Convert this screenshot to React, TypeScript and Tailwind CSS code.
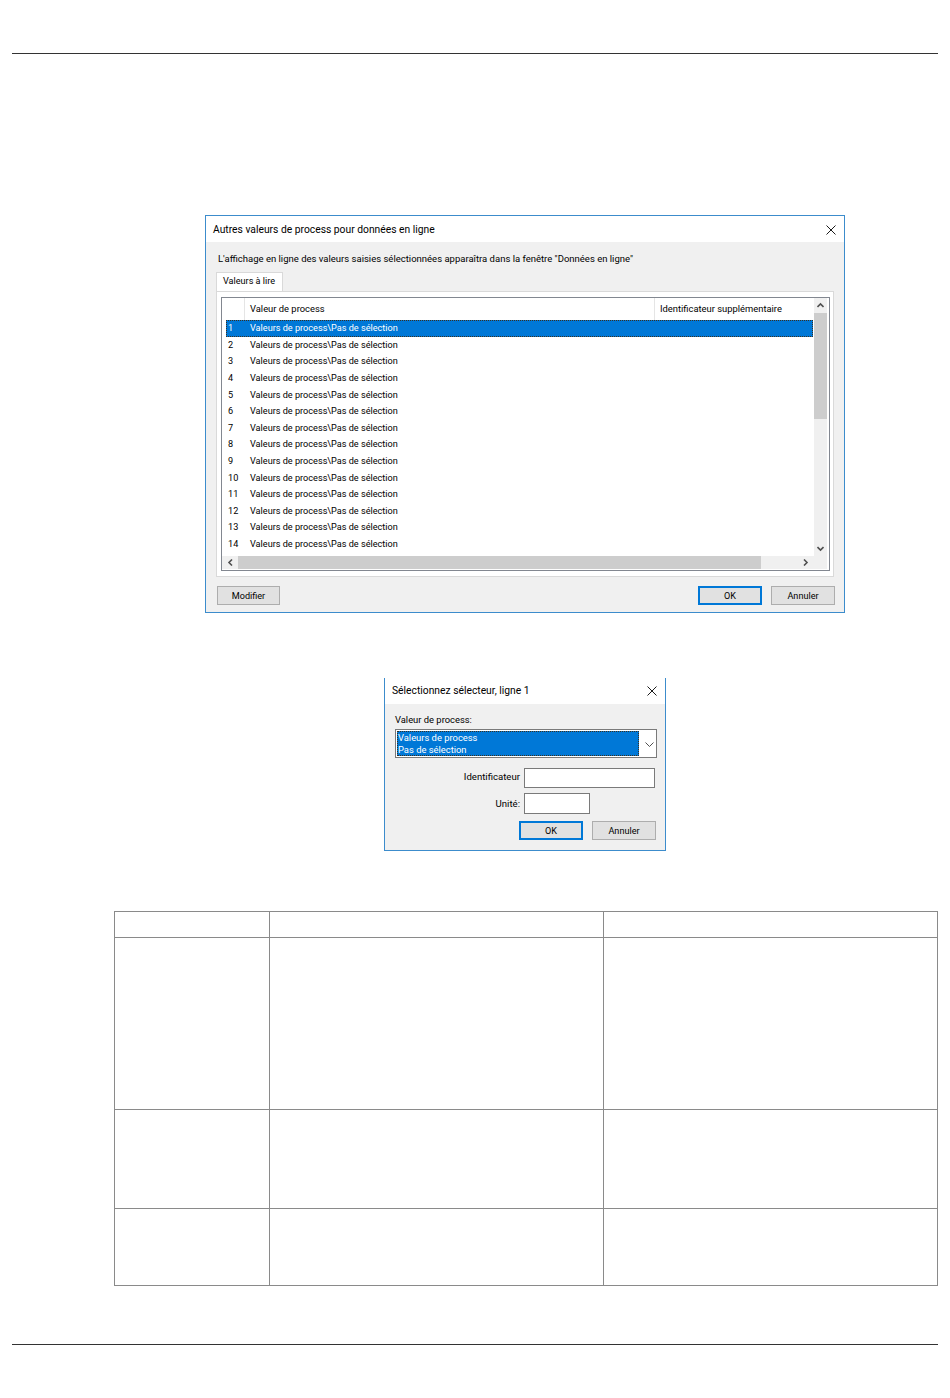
import React from "react";

const font = "[font-family:Roboto,'Liberation_Sans',sans-serif]";

const rows = Array.from({ length: 14 }, (_, i) => i + 1);

const WinButton = ({ label, primary, className }: { label: string; primary?: boolean; className?: string }) => (
  <div
    className={`flex h-[19px] items-center justify-center bg-[#e1e1e1] pt-[3px] text-[9.1px] leading-none text-black ${
      primary ? "border-2 border-[#0078d7]" : "border border-[#adadad]"
    } ${className ?? "w-[64px]"}`}
  >
    {label}
  </div>
);

const CloseIcon = () => (
  <svg width="10" height="10" viewBox="0 0 10 10" fill="none" stroke="#1a1a1a" strokeWidth="1">
    <path d="M0.5 0.5L9.5 9.5M9.5 0.5L0.5 9.5" />
  </svg>
);

const Chevron = ({ d }: { d: string }) => (
  <svg width="7" height="7" viewBox="0 0 7 7" fill="none" stroke="#505050" strokeWidth="1.6">
    <path d={d} />
  </svg>
);

const MainDialog = () => (
  <div className="ml-[205px] mt-[161px] flex h-[398px] w-[640px] flex-col border border-[#3c8ccc] bg-[#f0f0f0]">
    <div className="flex h-[26px] items-center justify-between bg-white pl-[7px] pr-[8px] pt-[1px] text-[10.3px] text-black">
      <span>Autres valeurs de process pour données en ligne</span>
      <CloseIcon />
    </div>
    <div className="pl-[12px] pt-[10px] text-[9.5px] leading-[14px] text-black">
      L'affichage en ligne des valeurs saisies sélectionnées apparaîtra dans la fenêtre "Données en ligne"
    </div>
    <div className="ml-[10px] mt-[6px] flex h-[19px] w-[67px] items-center whitespace-nowrap border border-b-0 border-[#d9d9d9] bg-white pl-[6px] text-[9.1px] leading-none">
      Valeurs à lire
    </div>
    <div className="ml-[10px] h-[286px] w-[618px] border border-[#d9d9d9] bg-white pl-[4px] pt-[5px]">
      <div className="flex h-[274px] w-[609px] flex-col border border-[#828790] bg-white">
        <div className="flex min-h-0 flex-1">
          <div className="flex min-w-0 flex-1 flex-col">
            <div className="flex h-[22px] shrink-0 text-[9.4px]">
              <div className="w-[23px] border-r border-[#e5e5e5]" />
              <div className="flex w-[410px] items-center border-r border-[#e5e5e5] pl-[5px]">Valeur de process</div>
              <div className="flex items-center pl-[5px]">Identificateur supplémentaire</div>
            </div>
            {rows.map((n) => (
              <div
                key={n}
                className={`ml-[4px] mr-[1px] flex h-[16.6px] shrink-0 items-center whitespace-nowrap pt-[1px] text-[9.15px] leading-none ${
                  n === 1 ? "bg-[#0078d7] text-white outline-1 -outline-offset-1 outline-dotted outline-[#3a3020]" : "text-black"
                }`}
              >
                <span className="w-[24px] pl-[2px]">{n}</span>
                <span>Valeurs de process\Pas de sélection</span>
              </div>
            ))}
          </div>
          <div className="w-[15px] shrink-0 pr-[2px]">
            <div className="flex h-full flex-col bg-[#f0f0f0]">
              <div className="flex h-[15px] items-center justify-center">
                <Chevron d="M0.5 5L3.5 2L6.5 5" />
              </div>
              <div className="h-[106px] bg-[#cdcdcd]" />
              <div className="flex-1" />
              <div className="flex h-[15px] items-center justify-center">
                <Chevron d="M0.5 2L3.5 5L6.5 2" />
              </div>
            </div>
          </div>
        </div>
        <div className="h-[14px] shrink-0 pb-[1px] pr-[2px]">
          <div className="flex h-full bg-[#f0f0f0]">
            <div className="flex w-[16px] items-center justify-center">
              <Chevron d="M5 0.5L2 3.5L5 6.5" />
            </div>
            <div className="w-[523px] bg-[#cdcdcd]" />
            <div className="flex flex-1 items-center pl-[41px]">
              <Chevron d="M2 0.5L5 3.5L2 6.5" />
            </div>
          </div>
        </div>
      </div>
    </div>
    <div className="flex pl-[11px] pt-[9px]">
      <WinButton label="Modifier" className="w-[63px]" />
      <WinButton label="OK" primary className="ml-[418px] w-[64px]" />
      <WinButton label="Annuler" className="ml-[9px] w-[64px]" />
    </div>
  </div>
);

const SelectDialog = () => (
  <div className="ml-[384px] mt-[65px] flex h-[173px] w-[282px] flex-col border border-t-0 border-[#3c8ccc] bg-[#f0f0f0]">
    <div className="flex h-[26px] items-center justify-between bg-white pl-[7px] pr-[8px] text-[10.3px] text-black">
      <span>Sélectionnez sélecteur, ligne 1</span>
      <CloseIcon />
    </div>
    <div className="pl-[10px] pt-[9px] text-[9.4px] leading-[14px]">Valeur de process:</div>
    <div className="ml-[10px] mt-[2px] flex h-[29px] w-[262px] items-center border border-[#7a7a7a] bg-white pl-[1px]">
      <div className="h-[25px] w-[242px] bg-[#0078d7] pl-[1px] pt-[1px] text-[9.4px] leading-[11.5px] text-white outline-1 -outline-offset-1 outline-dotted outline-[#3a3020]">
        <div>Valeurs de process</div>
        <div>Pas de sélection</div>
      </div>
      <div className="flex flex-1 justify-center pl-[3px] pt-[2px]">
        <svg width="9" height="6" viewBox="0 0 9 6" fill="none" stroke="#505050" strokeWidth="1">
          <path d="M0.5 0.5L4.5 4.5L8.5 0.5" />
        </svg>
      </div>
    </div>
    <div className="mt-[10px] flex h-[20px] items-center">
      <span className="w-[135px] pb-[2px] text-right text-[9.6px]">Identificateur</span>
      <div className="ml-[4px] h-[20px] w-[131px] border border-[#7a7a7a] bg-white" />
    </div>
    <div className="mt-[5px] flex h-[21px] items-center">
      <span className="w-[135px] pt-[1px] text-right text-[9.6px]">Unité:</span>
      <div className="ml-[4px] h-[21px] w-[66px] border border-[#7a7a7a] bg-white" />
    </div>
    <div className="ml-[134px] mt-[7px] flex">
      <WinButton label="OK" primary />
      <WinButton label="Annuler" className="ml-[9px] w-[64px]" />
    </div>
  </div>
);

const cell = "border border-[#8a8a8a] p-0";

const ParamTable = () => (
  <table className="ml-[114px] mt-[60px] h-[375px] w-[824px] table-fixed border-collapse">
    <tbody>
      {[26, 172, 99, 77].map((h) => (
        <tr key={h} style={{ height: h }}>
          <td className={`${cell} w-[155px]`} />
          <td className={`${cell} w-[334px]`} />
          <td className={cell} />
        </tr>
      ))}
    </tbody>
  </table>
);

export default function App() {
  return (
    <div className={`h-[1398px] w-[950px] overflow-hidden bg-white ${font}`}>
      <div className="mx-[12px] mt-[53px] border-t border-[#333333]" />
      <MainDialog />
      <SelectDialog />
      <ParamTable />
      <div className="mx-[12px] mt-[58px] border-t border-[#333333]" />
    </div>
  );
}
